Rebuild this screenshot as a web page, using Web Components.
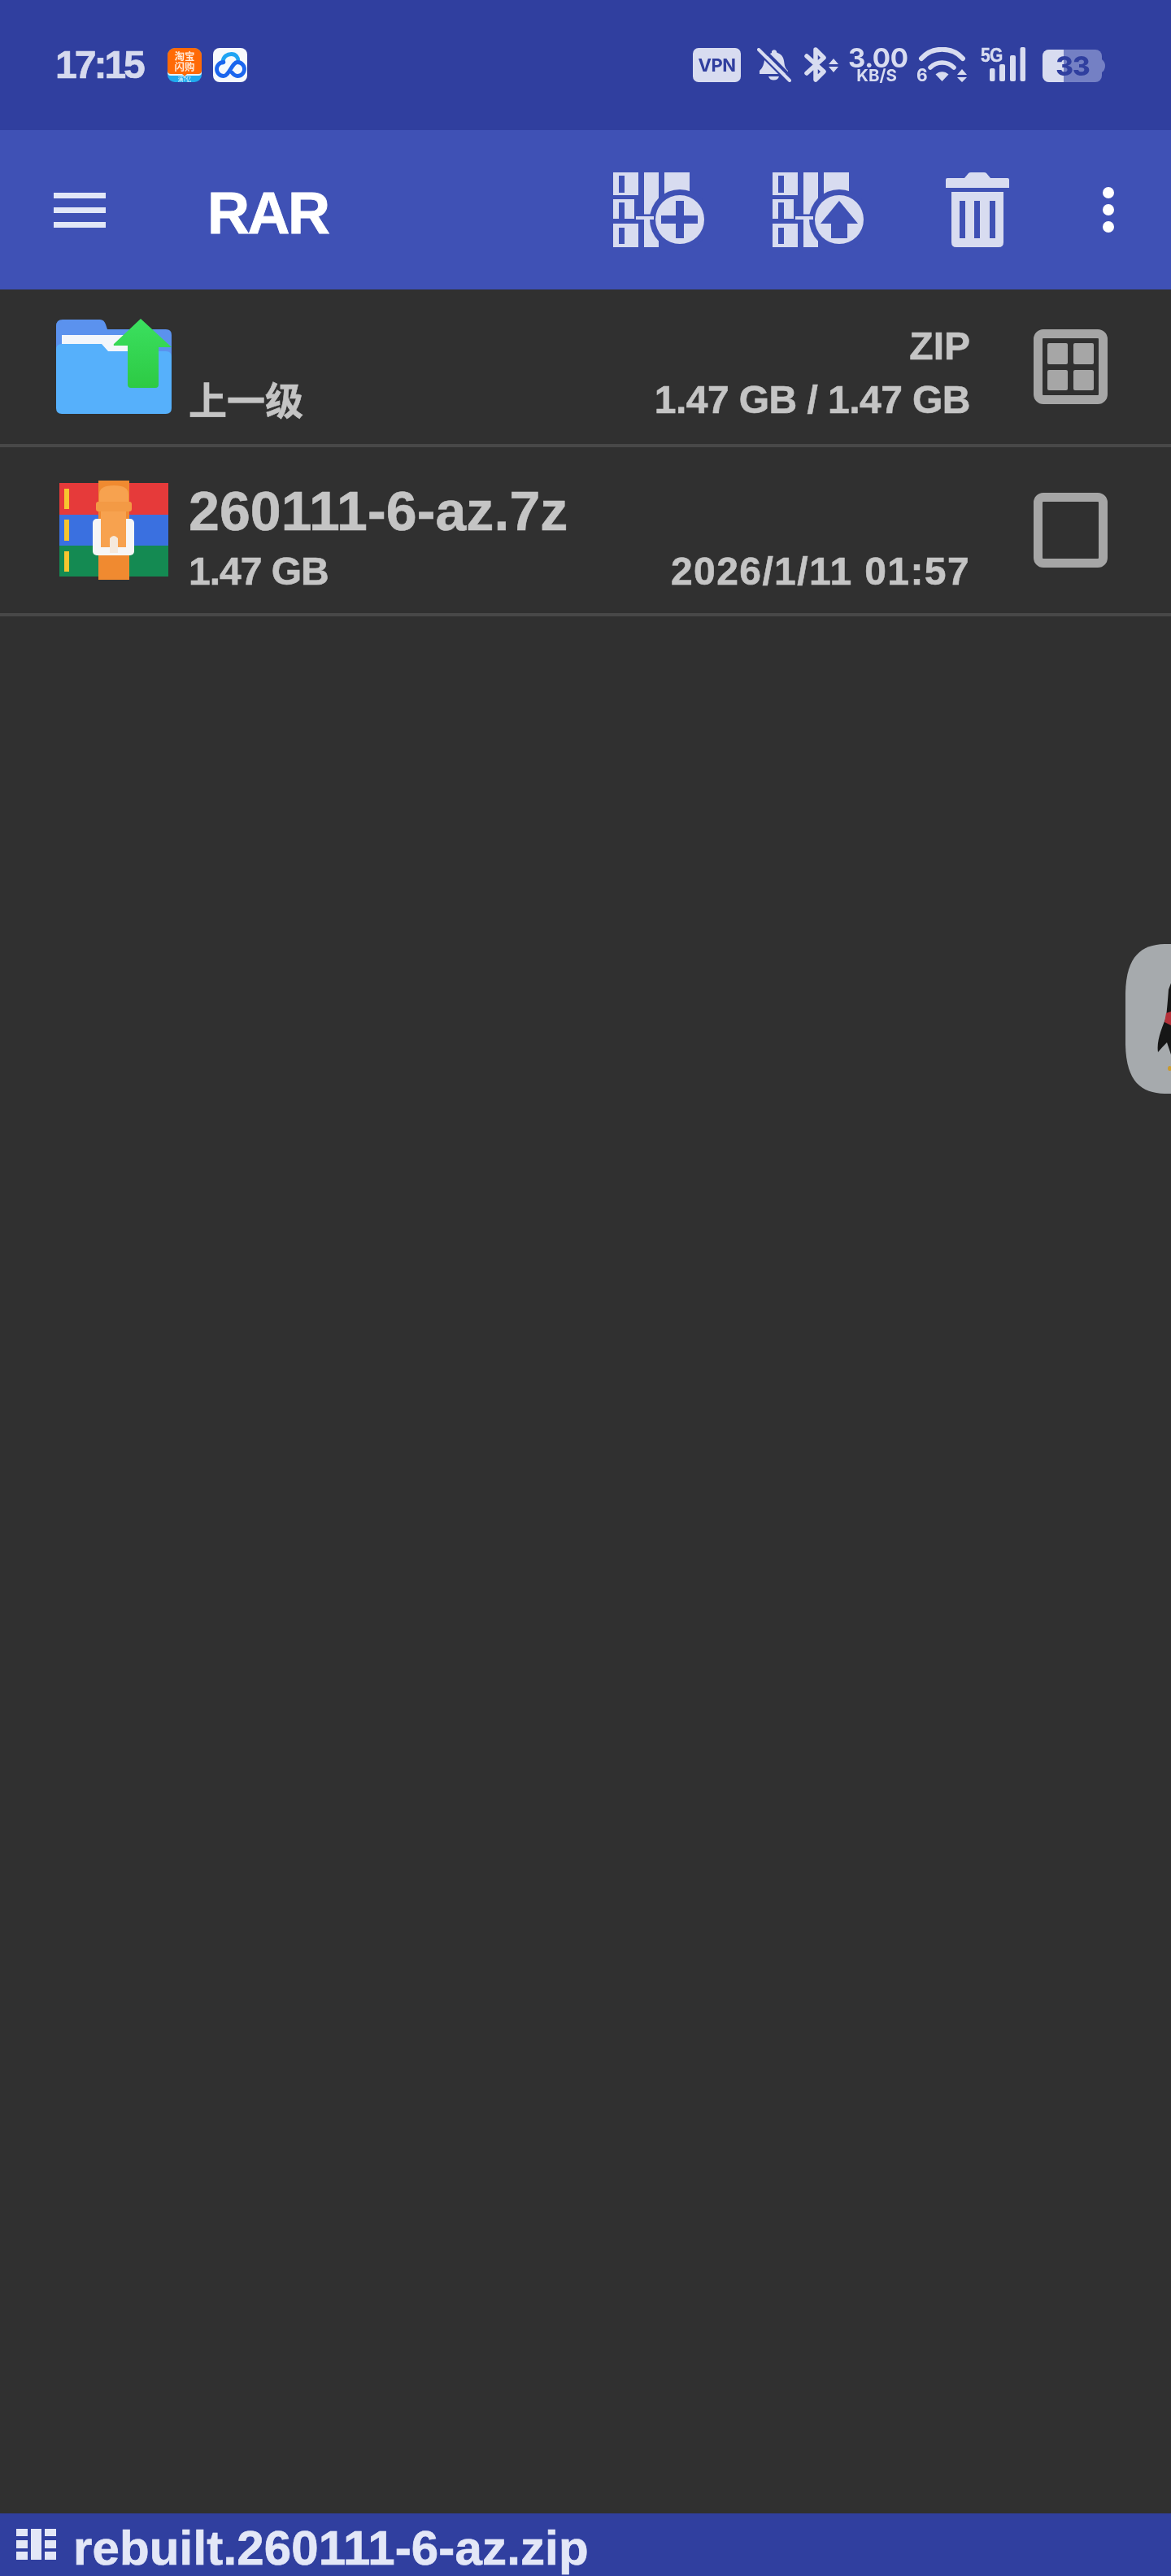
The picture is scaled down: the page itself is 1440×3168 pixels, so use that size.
<!DOCTYPE html>
<html lang="zh">
<head>
<meta charset="utf-8">
<title>RAR</title>
<style>
html,body{margin:0;padding:0;background:#303030}
body{font-family:"Liberation Sans","Noto Sans CJK SC",sans-serif}
#page{display:flex;flex-direction:column;width:1440px;height:3168px;position:relative;overflow:hidden;filter:blur(.6px)}
rar-list{flex:1}
</style>
</head>
<body>
<div id="page">
  <rar-status-bar></rar-status-bar>
  <rar-toolbar title-text="RAR"></rar-toolbar>
  <rar-list>
    <rar-row kind="up" style="--pad:42px;--check-top:49px;--h:190px">
      <span slot="name"></span>
      <span slot="sub" class="cjk">上一级</span>
      <span slot="top">ZIP</span>
      <span slot="bottom">1.47 GB / 1.47 GB</span>
    </rar-row>
    <rar-row kind="rar" style="--pad:42px;--check-top:56px;--h:204px">
      <span slot="name">260111-6-az.7z</span>
      <span slot="sub">1.47 GB</span>
      <span slot="top"></span>
      <span slot="bottom">2026/1/11 01:57</span>
    </rar-row>
  </rar-list>
  <rar-path-bar>rebuilt.260111-6-az.zip</rar-path-bar>
  <rar-float-ball></rar-float-ball>
</div>

<template id="t-status">
<style>
:host{display:flex;box-sizing:border-box;height:160px;background:#303f9f;align-items:flex-start;padding:58px 81px 0 68px;color:#d8dcf0;font-family:Inter,"Liberation Sans",sans-serif}
.time{font:700 48px/44px "Liberation Sans",sans-serif;letter-spacing:-3px;width:138px;color:#d6daee;-webkit-text-stroke:.7px #d6daee}
.app{width:42px;height:42px;margin-top:1px;display:block}
.app+.app{margin-left:14px}
.right{margin-left:auto;display:flex;align-items:flex-start}
svg{display:block}
.vpn{box-sizing:border-box;width:59px;height:42px;margin-top:1px;border-radius:7px;background:#d8dcf0;color:#303f9f;font:700 22px/42px Inter,sans-serif;text-align:center;letter-spacing:-.5px}
.speed{width:70px;margin-left:12px;text-align:center}
.speed b{display:block;font:700 33px/26px Inter,sans-serif;letter-spacing:-.4px}
.speed i{display:block;font:700 20.500px/18px Inter,sans-serif;font-style:normal}
.wifi{position:relative;width:63px;height:44px;margin-left:13px}
.wifi span{position:absolute;left:1px;top:26px;font:700 21px/18px Inter,sans-serif}
.sig{position:relative;width:56px;height:44px;margin-left:16px}
.sig span{position:absolute;left:1px;top:0;font:700 21px/18px "Liberation Sans",sans-serif;letter-spacing:-.6px;transform:scaleY(1.12);transform-origin:0 0;-webkit-text-stroke:.4px #d8dcf0}
.bat{position:relative;width:77px;height:40px;margin-left:21px;margin-top:3px}
.bat span{position:absolute;left:15px;top:0;width:44px;text-align:center;font:800 33px/40px Inter,sans-serif;color:#303f9f;letter-spacing:-1px}
</style>
<div class="time">17:15</div>
<svg class="app" viewBox="0 0 42 42">
  <defs><clipPath id="tb"><rect width="42" height="42" rx="9"/></clipPath></defs>
  <g clip-path="url(#tb)">
    <rect width="42" height="42" fill="#1fa9ee"/>
    <path d="M0 0H42V29Q42 32 38 32H24L21 35 18 32H4Q0 32 0 29Z" fill="#ff6a06"/>
    <path d="M0 28Q0 32 4 32H18L21 35 24 32H38Q42 32 42 28V30Q42 34 38 34H24L21 36 18 34H4Q0 34 0 30Z" fill="#e9f2f6"/>
    <text x="21" y="15" font-size="12.500" font-weight="700" text-anchor="middle" fill="#ffe9d8" font-family="Noto Sans CJK SC">淘宝</text>
    <text x="21" y="28" font-size="12.500" font-weight="700" text-anchor="middle" fill="#ffe9d8" font-family="Noto Sans CJK SC">闪购</text>
    <text x="21" y="41" font-size="6.500" text-anchor="middle" fill="#e8f6ff" font-family="Noto Sans CJK SC">满7亿</text>
  </g>
</svg>
<svg class="app" viewBox="0 0 42 42">
  <rect width="42" height="42" rx="8" fill="#f6f9fc"/>
  <path d="M12 18C12 10 18 7.500 22.500 7.500 28 7.500 31 11.500 31 16.500" fill="none" stroke="#1fa4f3" stroke-width="4.800" stroke-linecap="round"/>
  <path d="M13 17.500a8.500 8.500 0 0 0 0 17c6.500 0 10.500-17 17-17a8.500 8.500 0 0 1 0 17c-3 0-5-2-7-4.500" fill="none" stroke="#1b66ee" stroke-width="4.800" stroke-linecap="round"/>
</svg>
<div class="right">
  <div class="vpn">VPN</div>
  <svg width="42" height="42" viewBox="0 0 42 42" style="margin-left:20px;margin-top:1px" fill="#d8dcf0">
    <path d="M18 4a3.500 3.500 0 0 1 6 0c0 1 0 1.500 1 2 7 2 8 8 8.500 13 .4 4 2 7 4.500 9v4H32L12 12C13 9 15 7 18 6ZM9 15C8 22 6 25 3 28v4H26Z"/>
    <path d="M14 35h13c-1 3-3 4.500-6.500 4.500S15 38 14 35z"/>
    <path d="M6 0 42 36" stroke="#303f9f" stroke-width="4"/>
    <path d="M2 2 40 40" stroke="#d8dcf0" stroke-width="4" stroke-linecap="round"/>
  </svg>
  <svg width="42" height="43" viewBox="0 0 42 43" style="margin-left:16px" fill="none">
    <path d="M3 11 24 30l-10 10V3l10 10L3 32" stroke="#d8dcf0" stroke-width="5.500" stroke-linejoin="round" stroke-linecap="round"/>
    <path d="M30 21 36 14 42 21ZM30 24H42L36 31Z" fill="#d8dcf0"/>
  </svg>
  <div class="speed"><b>3.00</b><i>KB/S</i></div>
  <div class="wifi">
    <svg width="63" height="44" viewBox="0 0 63 44" fill="none" stroke="#d8dcf0" stroke-linecap="round">
      <path d="M7 14C20 -1 45 -1 58 14" stroke-width="6"/>
      <path d="M18 25C26 17 39 17 47 25" stroke-width="5.500"/>
      <path d="M24.500 33.500C29 29 36 29 40.500 33.500L32.500 42Z" fill="#d8dcf0" stroke="none"/>
      <path d="M51 34 57 27 63 34ZM51 37H63L57 43Z" fill="#d8dcf0" stroke="none"/>
    </svg>
    <span>6</span>
  </div>
  <div class="sig">
    <span>5G</span>
    <svg width="56" height="44" viewBox="0 0 56 44" fill="#d8dcf0">
      <rect x="12" y="26" width="6.500" height="16" rx="2"/><rect x="24" y="21" width="7" height="21" rx="2"/><rect x="37" y="10" width="7" height="32" rx="2"/><rect x="49.500" y="0" width="6.500" height="42" rx="2"/>
    </svg>
  </div>
  <div class="bat">
    <svg width="77" height="40" viewBox="0 0 77 40">
      <path d="M8 0H65a8 8 0 0 1 8 8v24a8 8 0 0 1-8 8H8a8 8 0 0 1-8-8V8a8 8 0 0 1 8-8z" fill="#7480c4"/>
      <path d="M8 0H26V40H8a8 8 0 0 1-8-8V8a8 8 0 0 1 8-8z" fill="#d8dcf0"/>
      <path d="M73 12q4 3 4 8t-4 8z" fill="#7480c4"/>
    </svg>
    <span>33</span>
  </div>
</div>
</template>

<template id="t-toolbar">
<style>
:host{display:flex;box-sizing:border-box;height:196px;background:#3f51b5;align-items:center;padding:0 70px 0 66px}
svg{display:block;flex:none}
.title{margin-left:125px;margin-top:7px;font:700 72px/80px "Liberation Sans",sans-serif;color:#fff;letter-spacing:-2.500px;-webkit-text-stroke:.8px #fff}
.spacer{flex:1}
</style>
<svg width="64" height="43" viewBox="0 0 64 43" fill="#e2e7f7"><rect width="64" height="7"/><rect y="18" width="64" height="7"/><rect y="36" width="64" height="7"/></svg>
<div class="title"></div>
<div class="spacer"></div>
<svg width="112" height="92" viewBox="0 0 112 92" id="add"></svg>
<svg width="112" height="92" viewBox="0 0 112 92" id="ext" style="margin-left:84px"></svg>
<svg width="78" height="92" viewBox="0 0 78 92" style="margin-left:101px" fill="#d8dcf0">
  <path d="M23 7 28 1Q29 0 31 0H47Q49 0 50 1L55 7H76Q78 7 78 9V19H0V9Q0 7 2 7Z"/>
  <path fill-rule="evenodd" d="M7 24H71V86Q71 92 65 92H13Q7 92 7 86ZM17 35V81H24V35ZM35 35V81H42V35ZM54 35V81H61V35Z"/>
</svg>
<svg width="14" height="56" viewBox="0 0 14 56" style="margin-left:115px" fill="#fff"><circle cx="7" cy="7" r="7"/><circle cx="7" cy="28" r="7"/><circle cx="7" cy="49" r="7"/></svg>
</template>

<template id="t-row">
<style>
:host{display:flex;box-sizing:border-box;height:calc(var(--h) + 4px);border-bottom:4px solid #484848;padding-right:78px;color:#c4c4c4;font-family:"Liberation Sans","Noto Sans CJK SC",sans-serif;font-weight:700;-webkit-text-stroke:.6px #c4c4c4}
.icon{flex:none;width:232px;display:block}
.left,.right{padding-top:var(--pad);display:flex;flex-direction:column}
.left{flex:1;min-width:0}
.right{text-align:right;align-items:flex-end}
.l1{height:56px;font-size:48px;line-height:56px;white-space:pre}
.l2{height:56px;font-size:48px;line-height:56px;margin-top:10px;white-space:pre}
:host([kind=rar]) .left .l1{height:72px;font-size:68px;line-height:72px;letter-spacing:.1px}
:host([kind=rar]) .l2{margin-top:11px}
:host([kind=rar]) .right .l1{height:72px}
:host([kind=rar]) .left .l2{letter-spacing:-1px}
:host([kind=rar]) .right .l2{letter-spacing:1.400px}
:host([kind=up]) .right .l2{letter-spacing:-.55px}
:host([kind=up]) .left .l2{font:700 47px/52px "Noto Sans CJK SC",sans-serif}
rar-check{margin-left:78px;margin-top:var(--check-top)}
</style>
<svg class="icon" viewBox="0 0 232 204" width="232" height="204"></svg>
<div class="left"><div class="l1"><slot name="name"></slot></div><div class="l2"><slot name="sub"></slot></div></div>
<div class="right"><div class="l1"><slot name="top"></slot></div><div class="l2"><slot name="bottom"></slot></div></div>
<rar-check></rar-check>
</template>

<template id="t-check">
<style>
:host{display:block;box-sizing:border-box;width:91px;height:92px;border:11px solid #a6a6a6;border-radius:12px;flex:none;padding:6px}
.g{display:none;grid-template-columns:1fr 1fr;grid-template-rows:1fr 1fr;gap:7px;height:100%}
.g i{display:block;background:#a6a6a6;border-radius:2px}
:host([mixed]) .g{display:grid}
</style>
<div class="g"><i></i><i></i><i></i><i></i></div>
</template>

<template id="t-path">
<style>
:host{display:flex;box-sizing:border-box;height:77px;background:#303f9f;align-items:flex-start;padding-left:20px;color:#e3e7f7}
svg{display:block;margin-top:19px;flex:none}
.t{margin-left:21px;margin-top:8px;font:700 60px/69px "Liberation Sans",sans-serif;letter-spacing:.15px;white-space:pre;-webkit-text-stroke:.7px #e3e7f7}
</style>
<svg width="49" height="38" viewBox="0 0 49 38" fill="#e3e7f7">
  <rect width="14" height="9"/><rect y="14" width="14" height="10"/><rect y="28" width="14" height="10"/>
  <rect x="18" width="13" height="38"/>
  <rect x="35" width="14" height="9"/><rect x="35" y="14" width="14" height="10"/><rect x="35" y="28" width="14" height="10"/>
</svg>
<div class="t"><slot></slot></div>
</template>

<template id="t-ball">
<style>
:host{display:block;position:absolute;left:1384px;top:1161px;width:56px;height:184px;overflow:hidden}
svg{display:block}
</style>
<svg width="56" height="184" viewBox="0 0 56 184">
  <path d="M56 0H48C20 1 1 14 0 60V124C1 170 20 183 48 184H56Z" fill="#a6aaad"/>
  <path d="M56 48 53 56C52 70 51 80 50 90 44 105 38 120 40 133 44 128 48 124 51 121L56 136Z" fill="#161616"/>
  <path d="M50 85 56 83V100L48 96Z" fill="#b5313a"/>
  <ellipse cx="54.500" cy="153" rx="2.500" ry="3" fill="#c99a2e"/>
</svg>
</template>

<script>
const tpl = id => document.getElementById(id).content.cloneNode(true);
class Base extends HTMLElement {
  constructor(id){super();this.attachShadow({mode:'open'}).appendChild(tpl(id));}
}
class RarStatusBar extends Base{constructor(){super('t-status');}}
const archive = (bg, extra) => `
  <g fill="#d8dcf0">
    <path fill-rule="evenodd" d="M0 0H31V28H0ZM7 4V25H14V4Z"/>
    <path fill-rule="evenodd" d="M0 33H26V57H0ZM7 37V57H14V37Z"/>
    <path fill-rule="evenodd" d="M0 63H31V92H0ZM7 68V88H14V68Z"/>
    <rect x="38" width="18" height="92"/>
    <rect x="63" width="31" height="40"/>
  </g>
  <path d="M33 30V53H50" fill="none" stroke="${bg}" stroke-width="3"/>
  <circle cx="82" cy="58" r="37" fill="${bg}"/>
  <rect x="28" y="54" width="22" height="4" fill="#d8dcf0"/>
  <circle cx="82" cy="58" r="30" fill="#d8dcf0"/>
  ${extra}`;
class RarToolbar extends Base{
  constructor(){
    super('t-toolbar');
    const bg='#3f51b5', s=this.shadowRoot;
    s.getElementById('add').innerHTML = archive(bg,`<path d="M77 35H87V53H104V63H87V81H77V63H59V53H77Z" fill="${bg}"/>`);
    s.getElementById('ext').innerHTML = archive(bg,`<path d="M82 35 105 63H92V81H72V63H59Z" fill="${bg}"/>`);
  }
  connectedCallback(){this.shadowRoot.querySelector('.title').textContent=this.getAttribute('title-text');}
}
const ICONS = {
  up:`<path d="M69 45q0-8 8-8h46q5 0 7 6l2 6h72q7 0 7 7v30H69Z" fill="#5b92ee"/>
      <path d="M76 56H165V80H76Z" fill="#f3f6fb"/>
      <path d="M69 74q0-7 7-7h49l8 9H204q7 0 7 7v63q0 7-7 7H76q-7 0-7-7Z" fill="#56b0fb"/>
      <defs><linearGradient id="ga" x1="0" y1="0" x2="0" y2="1"><stop offset="0" stop-color="#3be05f"/><stop offset="1" stop-color="#2dca44"/></linearGradient></defs>
      <path d="M173 36 211 71 195 71V117q0 4-4 4H161q-4 0-4-4V69H141q-2 0-1-2Z" fill="url(#ga)"/>`,
  rar:`<rect x="73" y="44" width="134" height="39" fill="#e63a3a"/>
      <rect x="73" y="83" width="134" height="38" fill="#3a70e0"/>
      <rect x="73" y="121" width="134" height="38" fill="#148a52"/>
      <g fill="#f7c52f"><rect x="79" y="51" width="6" height="25"/><rect x="79" y="89" width="6" height="26"/><rect x="79" y="128" width="6" height="25"/></g>
      <rect x="121" y="41" width="38" height="50" fill="#f08a30"/>
      <rect x="121" y="130" width="38" height="33" fill="#f08a30"/>
      <rect x="114" y="88" width="51" height="45" rx="5" fill="#f6f6f6"/>
      <path d="M122 67V58Q122 47 140 47T158 58V67Z" fill="#f7a24f"/>
      <rect x="118" y="67" width="44" height="12" rx="3" fill="#f39a45"/>
      <path d="M124 79H155V123H124Z" fill="#f7a24f"/>
      <path d="M135 112Q140 106 145 112V130H135Z" fill="#f5e9dc"/>`
};
class RarRow extends Base{
  constructor(){super('t-row');}
  connectedCallback(){
    const k=this.getAttribute('kind');
    this.shadowRoot.querySelector('.icon').innerHTML=ICONS[k];
    if(k==='up')this.shadowRoot.querySelector('rar-check').setAttribute('mixed','');
  }
}
class RarCheck extends Base{constructor(){super('t-check');}}
class RarList extends HTMLElement{
  constructor(){super();this.attachShadow({mode:'open'}).innerHTML='<style>:host{display:block;background:#303030}</style><slot></slot>';}
}
class RarPathBar extends Base{constructor(){super('t-path');}}
class RarFloatBall extends Base{constructor(){super('t-ball');}}
customElements.define('rar-check',RarCheck);
customElements.define('rar-status-bar',RarStatusBar);
customElements.define('rar-toolbar',RarToolbar);
customElements.define('rar-row',RarRow);
customElements.define('rar-list',RarList);
customElements.define('rar-path-bar',RarPathBar);
customElements.define('rar-float-ball',RarFloatBall);
</script>
</body>
</html>
